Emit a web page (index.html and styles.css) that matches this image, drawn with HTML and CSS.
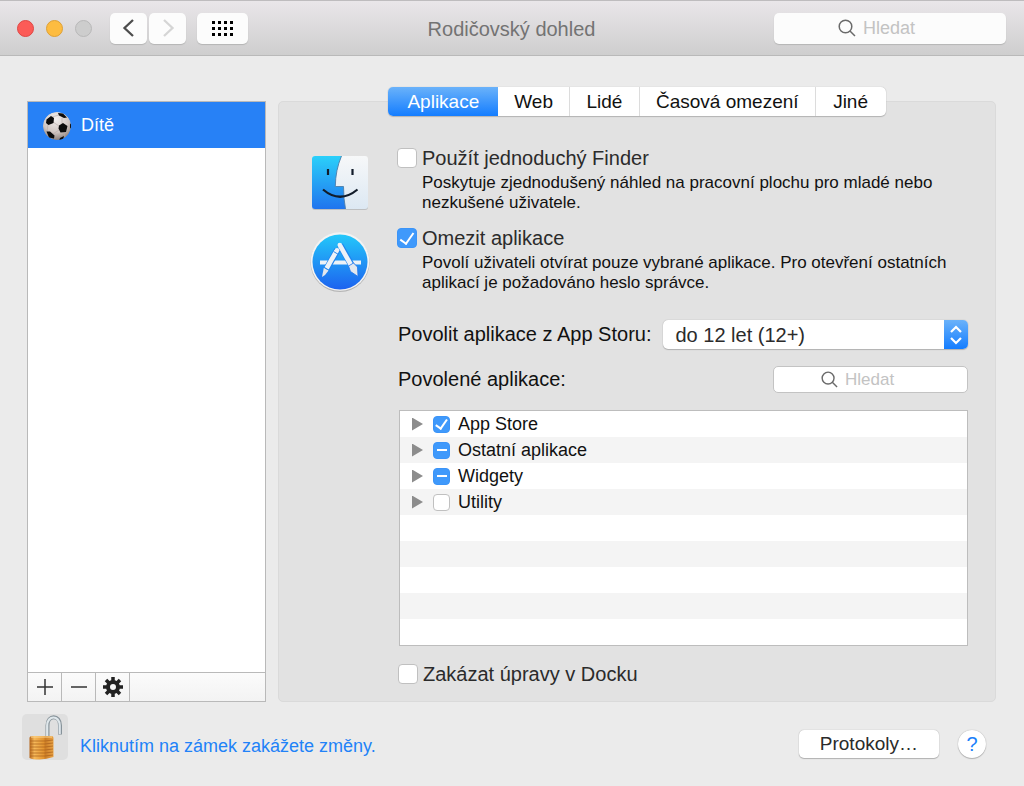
FILE: index.html
```html
<!doctype html>
<html lang="cs">
<head>
  <meta charset="UTF-8" />
  <meta name="viewport" content="width=device-width, initial-scale=1.0" />
  <title>Rodičovský dohled</title>
  <link rel="stylesheet" href="styles.css">
</head>
<body>
  <header class="titlebar">
    <div class="titlebar-left">
      <div class="lights">
        <button type="button" class="light light-close" aria-label="Zavřít"></button>
        <button type="button" class="light light-min" aria-label="Minimalizovat"></button>
        <button type="button" class="light" aria-label="Zvětšit" disabled></button>
      </div>
      <div class="nav">
        <button type="button" class="tool-btn" aria-label="Zpět">
          <svg width="18" height="20" viewBox="0 0 18 20" fill="none" stroke="#4d4d4d" stroke-width="2.300"><path d="M13 2 4.500 10 13 18" /></svg>
        </button>
        <button type="button" class="tool-btn" aria-label="Vpřed" disabled>
          <svg width="18" height="20" viewBox="0 0 18 20" fill="none" stroke="#d5d5d5" stroke-width="2.300"><path d="M5 2 13.500 10 5 18" /></svg>
        </button>
      </div>
      <button type="button" class="tool-btn tool-btn-wide" aria-label="Zobrazit vše">
        <svg width="21" height="15" viewBox="0 0 21 15" fill="#000">
          <path d="M0 0h3v3H0zM6 0h3v3H6zM12 0h3v3h-3zM18 0h3v3h-3zM0 6h3v3H0zM6 6h3v3H6zM12 6h3v3h-3zM18 6h3v3h-3zM0 12h3v3H0zM6 12h3v3H6zM12 12h3v3h-3zM18 12h3v3h-3z" />
        </svg>
      </button>
    </div>
    <h1>Rodičovský dohled</h1>
    <label class="search search-main">
      <svg width="18" height="18" viewBox="0 0 18 18" fill="none" stroke="#6a6a6a" stroke-width="1.500"><circle cx="7.500" cy="7.500" r="6.300" /><path d="m12 12 5 5" /></svg>
      <input type="search" placeholder="Hledat" aria-label="Hledat" />
    </label>
  </header>

  <main class="content">
    <aside class="sidebar">
      <ul class="users">
        <li>
          <a href="#dite" class="user">
            <svg width="28" height="28" viewBox="0 0 28 28">
              <defs>
                <radialGradient id="ball" cx=".45" cy=".25" r=".8">
                  <stop offset="0" stop-color="#f3f0ef" />
                  <stop offset=".6" stop-color="#cfc5c1" />
                  <stop offset="1" stop-color="#81736d" />
                </radialGradient>
                <clipPath id="ballClip"><circle cx="14" cy="14" r="14" /></clipPath>
              </defs>
              <g clip-path="url(#ballClip)">
                <circle cx="14" cy="14" r="14" fill="url(#ball)" />
                <path d="M10 10l6 4M19 6v6M5 12l-1 8M16 18l-6 4M9 5l7-2M21 20l1 5" stroke="#b5aaa6" stroke-width=".6" fill="none" />
                <path d="M3.500 7.500 8 4l3 2-.5 5-5 2-2.500-2zM16 13.500l4-2.500 4.500 3-1.500 6-5.500 .5-2-4zM15 1l5 .5 4 4-3 .5-5-2.500zM3.500 19.500l3.500 0 4.500 4-.5 3-5-1zM27 12 29 11v6l-2-1zM17 26l4-2-1 4-4 1z" fill="#0b0b0b" />
              </g>
            </svg>
            Dítě
          </a>
        </li>
      </ul>
      <div class="user-tools">
        <button type="button" aria-label="Přidat">
          <svg width="16" height="16" viewBox="0 0 16 16" stroke="#333" stroke-width="1.500"><path d="M0 8h16M8 0v16" /></svg>
        </button>
        <button type="button" aria-label="Odebrat">
          <svg width="16" height="16" viewBox="0 0 16 16" stroke="#333" stroke-width="1.500"><path d="M0 8h16" /></svg>
        </button>
        <button type="button" aria-label="Akce">
          <svg width="20" height="20" viewBox="-10 -10 20 20" fill="none" stroke="#222">
            <circle r="5" stroke-width="4" />
            <path d="M0-10V-6M0 10V6M-10 0H-6M10 0H6M-7-7l3 3M7-7 4-4M-7 7l3-3M7 7 4 4" stroke-width="3.500" />
          </svg>
        </button>
      </div>
    </aside>

    <section class="panel">
      <div class="tabs" role="tablist">
        <button type="button" class="tab active" role="tab" aria-selected="true">Aplikace</button>
        <button type="button" class="tab" role="tab">Web</button>
        <button type="button" class="tab" role="tab">Lidé</button>
        <button type="button" class="tab" role="tab">Časová omezení</button>
        <button type="button" class="tab" role="tab">Jiné</button>
      </div>

      <div class="options">
        <div class="option">
          <svg class="option-icon" width="60" height="60" viewBox="0 0 60 60">
            <defs>
              <linearGradient id="finderBlue" x2="0" y2="1"><stop stop-color="#2bd0fa" /><stop offset="1" stop-color="#2074ee" /></linearGradient>
              <linearGradient id="finderWhite" x2="0" y2="1"><stop stop-color="#f7f8f9" /><stop offset="1" stop-color="#dce8f3" /></linearGradient>
            </defs>
            <rect x="2" y="5" width="56" height="53" rx="3" fill="#bdbfc1" />
            <rect x="2" y="4" width="56" height="53" rx="3" fill="url(#finderWhite)" />
            <path d="M5 4H31.500Q25.500 18 25.300 34.500H33.500Q33.500 47 35.500 57H5a3 3 0 0 1-3-3V7a3 3 0 0 1 3-3z" fill="url(#finderBlue)" />
            <path d="M31.500 4Q25.500 18 25.300 34.500H33.500Q33.500 47 35.500 57" fill="none" stroke="#4d7eaa" stroke-width=".9" />
            <path d="M18 17v6M42.500 17v6M13 37.500Q30 52 47.500 37.500" fill="none" stroke="#121c2a" stroke-width="2.200" />
          </svg>
          <div>
            <label class="check"><input type="checkbox" /> Použít jednoduchý Finder</label>
            <p class="hint">Poskytuje zjednodušený náhled na pracovní plochu pro mladé nebo nezkušené uživatele.</p>
          </div>
        </div>

        <div class="option">
          <svg class="option-icon" width="60" height="60" viewBox="0 0 60 60">
            <defs>
              <linearGradient id="store" x2="0" y2="1"><stop stop-color="#24c8fa" /><stop offset="1" stop-color="#1c62ef" /></linearGradient>
            </defs>
            <circle cx="30" cy="30.500" r="29.500" fill="#b5b5b5" />
            <circle cx="30" cy="29.500" r="29.300" fill="#f3f3f3" />
            <circle cx="30" cy="30" r="27.500" fill="url(#store)" />
            <path d="M10 28.500h41v4H10z" fill="#edf2f7" />
            <path d="M30 13 42 34" stroke="#1f83ee" stroke-width="6.500" />
            <path d="M30 13.500 41 33" stroke="#edf2f7" stroke-width="4.600" />
            <circle cx="29.800" cy="13" r="2.300" fill="#edf2f7" />
            <path d="m38.500 34 5-3 4 4 .5 9.500-7.500-5z" fill="#e3e8ee" stroke="#1f73ec" stroke-width=".8" />
            <path d="M27.500 17.500 16 38" stroke="#1f83ee" stroke-width="6.500" />
            <path d="M26.500 19 16.500 36.500" stroke="#edf2f7" stroke-width="4.600" />
            <circle cx="27" cy="18.300" r="2.300" fill="#edf2f7" />
            <path d="m13.800 35.800 4.800 2.800-3.600 4.400-3 2z" fill="#e3e8ee" />
            <path d="m23.500 19.500 5 3M13.500 35l5.500 3.200" stroke="#2a8cf0" />
          </svg>
          <div>
            <label class="check"><input type="checkbox" checked /> Omezit aplikace</label>
            <p class="hint">Povolí uživateli otvírat pouze vybrané aplikace. Pro otevření ostatních aplikací je požadováno heslo správce.</p>
          </div>
        </div>
      </div>

      <div class="apps">
        <div class="row">
          <label for="age">Povolit aplikace z App Storu:</label>
          <div class="select">
            <select id="age">
              <option>do 12 let (12+)</option>
            </select>
            <span class="select-arrows">
              <svg width="12" height="20" viewBox="0 0 12 20" fill="none" stroke="#fff" stroke-width="2.200"><path d="m1 7 5-5 5 5M1 13l5 5 5-5" /></svg>
            </span>
          </div>
        </div>

        <div class="row">
          <label for="app-search">Povolené aplikace:</label>
          <div class="search search-apps">
            <svg width="17" height="17" viewBox="0 0 18 18" fill="none" stroke="#6a6a6a" stroke-width="1.500"><circle cx="7.500" cy="7.500" r="6.300" /><path d="m12 12 5 5" /></svg>
            <input type="search" id="app-search" placeholder="Hledat" />
          </div>
        </div>

        <ul class="tree">
          <li>
            <button type="button" class="disclosure" aria-label="Rozbalit App Store"></button>
            <label class="check"><input type="checkbox" checked /> App Store</label>
          </li>
          <li>
            <button type="button" class="disclosure" aria-label="Rozbalit Ostatní aplikace"></button>
            <label class="check"><input type="checkbox" class="mixed" /> Ostatní aplikace</label>
          </li>
          <li>
            <button type="button" class="disclosure" aria-label="Rozbalit Widgety"></button>
            <label class="check"><input type="checkbox" class="mixed" /> Widgety</label>
          </li>
          <li>
            <button type="button" class="disclosure" aria-label="Rozbalit Utility"></button>
            <label class="check"><input type="checkbox" /> Utility</label>
          </li>
        </ul>

        <label class="check"><input type="checkbox" /> Zakázat úpravy v Docku</label>
      </div>
    </section>
  </main>

  <footer class="footer">
    <button type="button" class="lock" aria-label="Zámek">
      <svg width="46" height="46" viewBox="0 0 46 46">
        <defs>
          <linearGradient id="brass"><stop stop-color="#b5651a" /><stop offset=".2" stop-color="#f6b95a" /><stop offset=".6" stop-color="#e2932f" /><stop offset=".65" stop-color="#cb7d26" /><stop offset="1" stop-color="#eaa344" /></linearGradient>
        </defs>
        <path d="M25.500 23V11.500C25.500 .5 38 .5 38 11.500v9" fill="none" stroke="#87939a" stroke-width="4" />
        <path d="M25.200 23V11.500C25.200 .8 37.700 .8 37.700 11.500v8.500" fill="none" stroke="#dfe7eb" stroke-width="2.200" />
        <path d="M7.500 24q0-2 3-2h19q2 0 2 2v19q-7 2-14 2.500-7 0-10-1.500z" fill="url(#brass)" />
        <path d="M8 27h15l8-1M8 30h15l8-1M8 33h15l8-1M8 36h15l8-1M8 39h15l8-1M8 42h15l8-1" fill="none" stroke="#a85e1b" stroke-width=".7" />
        <path d="M9 23h21" stroke="#ffd891" />
      </svg>
    </button>
    <p class="lock-text">Kliknutím na zámek zakážete změny.</p>
    <button type="button" class="push-btn">Protokoly…</button>
    <button type="button" class="help-btn" aria-label="Nápověda">?</button>
  </footer>

  <script>
    document.querySelectorAll('.mixed').forEach((box) => {
      box.indeterminate = true;
    });
  </script>
</body>
</html>
```

FILE: styles.css
```css
* {
  box-sizing: border-box;
  margin: 0;
  padding: 0;
}

body {
  font-family: "Liberation Sans", Arial, Helvetica, sans-serif;
  font-size: 20px;
  color: #111;
  background: #ebebeb;
  min-height: 100vh;
  display: flex;
  flex-direction: column;
}

button,
input,
select {
  font: inherit;
  color: inherit;
  border: none;
  background: none;
}

svg {
  display: block;
  flex: none;
}

ul {
  list-style: none;
}

/* ===== Title bar ===== */
.titlebar {
  display: grid;
  grid-template-columns: 1fr auto 1fr;
  align-items: center;
  height: 56px;
  padding: 0 18px 0 17px;
  border-top: 1px solid #bebcbe;
  border-bottom: 1px solid #b9b9b9;
  background: linear-gradient(#e9e6e9, #cecece);
}

.titlebar h1 {
  font-size: 20px;
  line-height: 26px;
  padding-top: 2px;
  font-weight: normal;
  color: #737373;
}

.titlebar-left,
.lights,
.nav {
  display: flex;
  align-items: center;
}

.lights {
  gap: 12px;
  margin-right: 18px;
}

.light {
  width: 17px;
  height: 17px;
  border: 1px solid #b8b8b8;
  border-radius: 50%;
  background: #cdcdcd;
}

.light-close {
  background: #fc5b57;
  border-color: #df4744;
}

.light-min {
  background: #fdbc40;
  border-color: #dea035;
}

.nav {
  gap: 2px;
  margin-right: 11px;
}

.tool-btn {
  display: flex;
  align-items: center;
  justify-content: center;
  width: 37px;
  height: 31px;
  border-radius: 5px;
  background: #fcfcfc;
  box-shadow: 0 1px 1px #b5b5b5;
}

.tool-btn-wide {
  width: 51px;
}

.search {
  display: flex;
  align-items: center;
  gap: 7px;
  border-radius: 5px;
  background: #fff;
}

.search input {
  flex: 1;
  min-width: 0;
  outline: none;
}

.search input::placeholder {
  color: #c3c3c3;
}

.search-main {
  justify-self: end;
  width: 232px;
  height: 31px;
  padding-left: 64px;
  font-size: 18px;
  background: #fcfcfc;
  box-shadow: 0 1px 1px #b5b5b5;
}

.search-apps {
  width: 195px;
  height: 27px;
  padding-left: 47px;
  font-size: 17px;
  border: 1px solid #c3c3c3;
}

/* ===== Columns ===== */
.content {
  flex: 1;
  display: flex;
  gap: 12px;
  padding: 45px 28px 0 27px;
}

.sidebar {
  flex: none;
  display: flex;
  flex-direction: column;
  width: 239px;
  border: 1px solid #b9b9b9;
  background: #fff;
}

.users {
  flex: 1;
}

.user {
  display: flex;
  align-items: center;
  gap: 10px;
  height: 46px;
  padding: 1px 0 0 15px;
  font-size: 18px;
  color: #fff;
  background: #2781f6;
  text-decoration: none;
}

.user-tools {
  display: flex;
  height: 29px;
  border-top: 1px solid #b9b9b9;
  background: linear-gradient(#fbfbfb, #f3f3f3);
}

.user-tools button {
  display: flex;
  align-items: center;
  justify-content: center;
  width: 34px;
  border-right: 1px solid #b9b9b9;
}

.panel {
  flex: 1;
  display: flex;
  flex-direction: column;
  padding: 0 27px 13px;
  border: 1px solid #dadada;
  border-radius: 5px;
  background: #e2e2e2;
}

/* ===== Tabs ===== */
.tabs {
  display: flex;
  align-self: center;
  height: 29px;
  margin-top: -15px;
  border-radius: 5px;
  background: #fff;
  box-shadow: 0 0 1px #aaa, 0 1px 1px #b5b5b5;
}

.tab {
  min-width: 70px;
  padding: 0 16px;
  font-size: 19px;
  border-right: 1px solid #dcdcdc;
}

.tab:last-child {
  border-right: none;
}

.tab.active {
  padding: 0 19px;
  color: #fff;
  border-right: none;
  border-radius: 5px 0 0 5px;
  background: linear-gradient(#6ab2fa, #147dff);
}

/* ===== Checkboxes ===== */
.check {
  display: flex;
  align-items: center;
  gap: 5px;
  line-height: 28px;
  color: #2b2b2b;
}

.check input {
  appearance: none;
  flex: none;
  display: grid;
  place-items: center;
  width: 20px;
  height: 20px;
  border: 1px solid #c0c0c0;
  border-radius: 4px;
  background: #fff;
}

.check input:checked,
.check input:indeterminate {
  border-color: #3b94f8;
  background: #3f99fb;
}

.check input:checked::before {
  content: "";
  width: 6px;
  height: 12px;
  margin-bottom: 3px;
  border: solid #fff;
  border-width: 0 2px 2px 0;
  transform: rotate(35deg);
}

.check input:indeterminate::before {
  content: "";
  width: 10px;
  height: 2px;
  background: #fff;
}

/* ===== Options ===== */
.options {
  display: flex;
  flex-direction: column;
  gap: 12px;
  margin: 28px 0 0 4px;
}

.option {
  display: flex;
  gap: 27px;
}

.option-icon {
  margin-top: 8px;
}

.hint {
  padding: 1px 16px 0 25px;
  margin-bottom: -1px;
  font-size: 17px;
  line-height: 20px;
}

.apps {
  margin: 28px 0 0 92px;
}

.row {
  display: flex;
  align-items: center;
  justify-content: space-between;
  gap: 12px;
  margin-bottom: 17px;
}

.select {
  position: relative;
  flex: 1;
  height: 29px;
}

.select select {
  appearance: none;
  width: 100%;
  height: 29px;
  padding-left: 12px;
  color: #2b2b2b;
  border-radius: 5px;
  background: #fff;
  box-shadow: 0 0 1px #999, 0 1px 1px #b5b5b5;
}

.select-arrows {
  position: absolute;
  top: 0;
  right: 0;
  display: flex;
  align-items: center;
  justify-content: center;
  width: 24px;
  height: 29px;
  border-radius: 0 5px 5px 0;
  background: linear-gradient(#6ab2fa, #147dff);
  pointer-events: none;
}

.tree {
  height: 236px;
  margin: 0 0 14px 1px;
  border: 1px solid #bdbdbd;
  background: repeating-linear-gradient(#fff 0 26px, #f4f4f4 26px 52px);
  overflow-y: auto;
}

.tree li {
  display: flex;
  align-items: center;
  gap: 10px;
  height: 26px;
  padding-left: 12px;
}

.tree .check {
  gap: 8px;
  font-size: 18px;
  color: #111;
}

.tree .check input {
  width: 17px;
  height: 17px;
}

.tree .check input:checked::before {
  width: 5px;
  height: 10px;
}

.disclosure {
  width: 11px;
  height: 13px;
  background: #8c8c8c;
  clip-path: polygon(0 0, 100% 50%, 0 100%);
}

/* ===== Footer ===== */
.footer {
  display: flex;
  align-items: flex-end;
  padding: 12px 38px 26px 22px;
}

.lock {
  border-radius: 5px;
  background: #dfdfdf;
}

.lock-text {
  flex: 1;
  padding-left: 12px;
  font-size: 18px;
  line-height: 28px;
  color: #2182f8;
}

.push-btn,
.help-btn {
  height: 28px;
  margin-bottom: 2px;
  background: #fff;
  box-shadow: 0 0 1px #999, 0 1px 1px #b5b5b5;
}

.push-btn {
  padding: 0 21px;
  font-size: 19px;
  color: #2b2b2b;
  border-radius: 5px;
}

.help-btn {
  width: 28px;
  margin-left: 19px;
  color: #1a80fa;
  border-radius: 50%;
}
```
